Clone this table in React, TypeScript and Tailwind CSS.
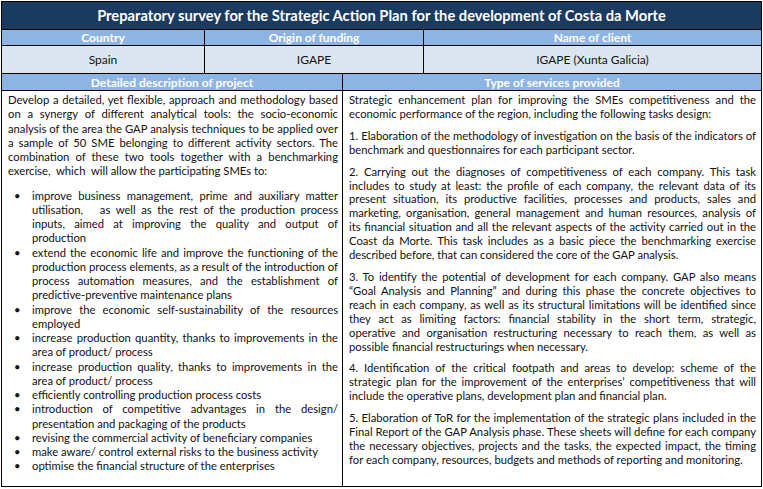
import React from 'react';

// each paragraph is given as its printed lines, the last one is left-aligned
const intro = [
    'Develop a detailed, yet flexible, approach and methodology based',
    'on a synergy of different analytical tools: the socio-economic',
    'analysis of the area the GAP analysis techniques to be applied over',
    'a sample of 50 SME belonging to different activity sectors. The',
    'combination of these two tools together with a benchmarking',
    'exercise,\u00a0 which\u00a0 will allow the participating SMEs to:',
];

const bullets = [
    [
        'improve business management, prime and auxiliary matter',
        'utilisation,\u00a0\u00a0 as well as the rest of the production process',
        'inputs, aimed at improving the quality and output of',
        'production',
    ],
    [
        'extend the economic life and improve the functioning of the',
        'production process elements, as a result of the introduction of',
        'process automation measures, and the establishment of',
        'predictive-preventive maintenance plans',
    ],
    ['improve the economic self-sustainability of the resources', 'employed'],
    ['increase production quantity, thanks to improvements in the', 'area of product/ process'],
    ['increase production quality, thanks to improvements in the', 'area of product/ process'],
    ['efficiently controlling production process costs'],
    ['introduction of competitive advantages in the design/', 'presentation and packaging of the products'],
    ['revising the commercial activity of beneficiary companies'],
    ['make aware/ control external risks to the business activity'],
    ['optimise the financial structure of the enterprises'],
];

const services = [
    [
        'Strategic enhancement plan for improving the SMEs competitiveness and the',
        'economic performance of the region, including the following tasks design:',
    ],
    [
        '1. Elaboration of the methodology of investigation on the basis of the indicators of',
        'benchmark and questionnaires for each participant sector.',
    ],
    [
        '2. Carrying out the diagnoses of competitiveness of each company. This task',
        'includes to study at least: the profile of each company, the relevant data of its',
        'present situation, its productive facilities, processes and products, sales and',
        'marketing, organisation, general management and human resources, analysis of',
        'its financial situation and all the relevant aspects of the activity carried out in the',
        'Coast da Morte. This task includes as a basic piece the benchmarking exercise',
        'described before, that can considered the core of the GAP analysis.',
    ],
    [
        '3. To identify the potential of development for each company. GAP also means',
        '\u201cGoal Analysis and Planning\u201d and during this phase the concrete objectives to',
        'reach in each company, as well as its structural limitations will be identified since',
        'they act as limiting factors: financial stability in the short term, strategic,',
        'operative and organisation restructuring necessary to reach them, as well as',
        'possible financial restructurings when necessary.',
    ],
    [
        '4. Identification of the critical footpath and areas to develop: scheme of the',
        'strategic plan for the improvement of the enterprises\u2019 competitiveness that will',
        'include the operative plans, development plan and financial plan.',
    ],
    [
        '5. Elaboration of ToR for the implementation of the strategic plans included in the',
        'Final Report of the GAP Analysis phase. These sheets will define for each company',
        'the necessary objectives, projects and the tasks, the expected impact, the timing',
        'for each company, resources, budgets and methods of reporting and monitoring.',
    ],
];

const Lines: React.FC<{ lines: string[] }> = ({ lines }) => (
    <>
        {lines.map((l, i) => (
            <div
                key={i}
                className={
                    i < lines.length - 1
                        ? 'whitespace-nowrap text-justify [text-align-last:justify]'
                        : 'whitespace-nowrap'
                }
            >
                {l}
            </div>
        ))}
    </>
);

const App: React.FC = () => {
    return (
        <div className="w-[763px] h-[489px] bg-white p-px font-['Lato',sans-serif]">
            <div className="w-[761px] border border-black flex flex-col">
                <div className="h-[28px] bg-[#1a3a60] text-white font-bold text-[14.7px] flex items-center justify-center border-b border-black">
                    Preparatory survey for the Strategic Action Plan for the development of Costa da Morte
                </div>
                <div className="grid grid-cols-[203px_219px_1fr] h-[16px] bg-[#8db4e2] text-white font-bold text-[12px] leading-[16px] text-center border-b border-black">
                    <div className="border-r border-black">Country</div>
                    <div className="border-r border-black">Origin of funding</div>
                    <div>Name of client</div>
                </div>
                <div className="grid grid-cols-[203px_219px_1fr] h-[28px] bg-[#dce6f1] text-[#111] text-[12px] text-center border-b border-black">
                    <div className="border-r border-black flex items-center justify-center">Spain</div>
                    <div className="border-r border-black flex items-center justify-center">IGAPE</div>
                    <div className="flex items-center justify-center">IGAPE (Xunta Galicia)</div>
                </div>
                <div className="grid grid-cols-[341px_1fr] h-[17px] bg-[#8db4e2] text-white font-bold text-[12px] leading-[17px] text-center border-b border-black">
                    <div className="border-r border-black">Detailed description of project</div>
                    <div>Type of services provided</div>
                </div>
                <div className="grid grid-cols-[341px_1fr] h-[395px] text-[11.25px] text-[#111]">
                    <div className="border-r border-black pl-[6px] pr-[4px] pt-[2px] leading-[14.25px]">
                        <div className="mb-[10px]">
                            <Lines lines={intro} />
                        </div>
                        <ul>
                            {bullets.map((b, i) => (
                                <li key={i} className="flex">
                                    <span className="w-[24px] shrink-0 pl-[6px]">&bull;</span>
                                    <div className="flex-1 min-w-0">
                                        <Lines lines={b} />
                                    </div>
                                </li>
                            ))}
                        </ul>
                    </div>
                    <div className="pl-[6px] pr-[5px] pt-[2px] leading-[13.9px]">
                        {services.map((s, i) => (
                            <div key={i} className="mb-[8px]">
                                <Lines lines={s} />
                            </div>
                        ))}
                    </div>
                </div>
            </div>
        </div>
    );
};

export default App;
